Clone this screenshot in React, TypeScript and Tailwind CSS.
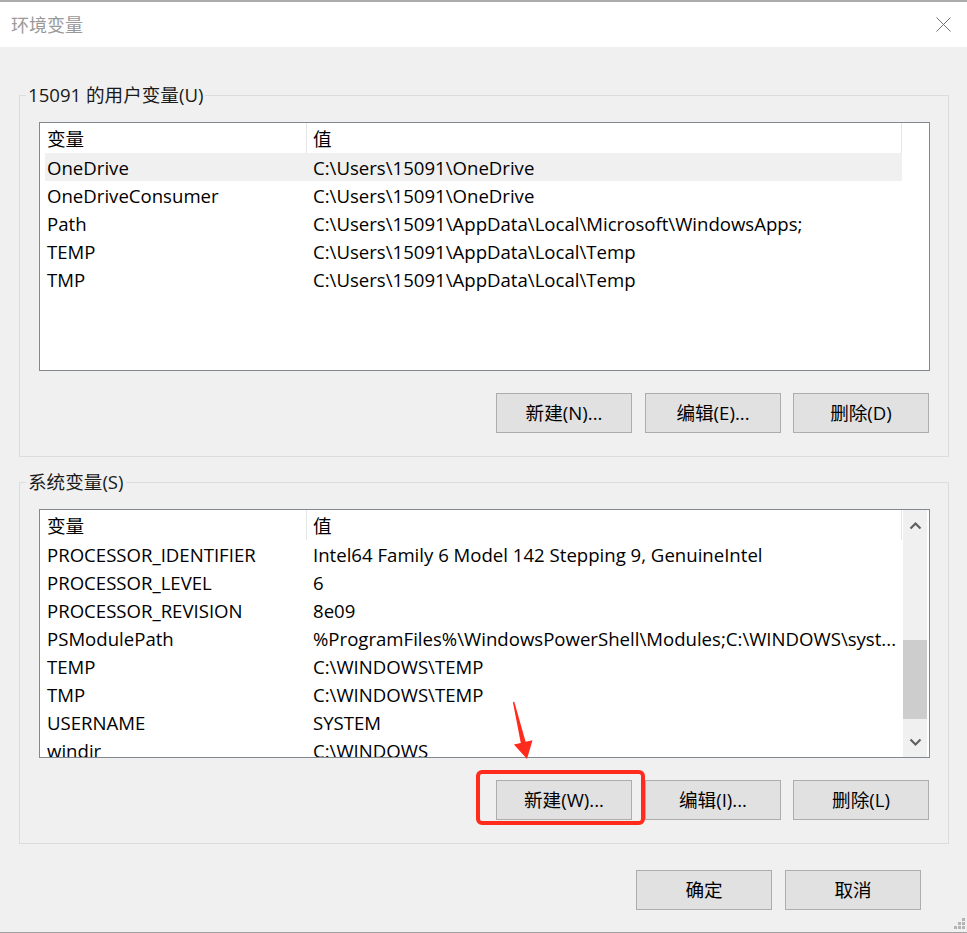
import React from "react";

type Row = { name: string; value: string; selected?: boolean };

const userVars: Row[] = [
  { name: "OneDrive", value: "C:\\Users\\15091\\OneDrive", selected: true },
  { name: "OneDriveConsumer", value: "C:\\Users\\15091\\OneDrive" },
  { name: "Path", value: "C:\\Users\\15091\\AppData\\Local\\Microsoft\\WindowsApps;" },
  { name: "TEMP", value: "C:\\Users\\15091\\AppData\\Local\\Temp" },
  { name: "TMP", value: "C:\\Users\\15091\\AppData\\Local\\Temp" },
];

const sysVars: Row[] = [
  { name: "PROCESSOR_IDENTIFIER", value: "Intel64 Family 6 Model 142 Stepping 9, GenuineIntel" },
  { name: "PROCESSOR_LEVEL", value: "6" },
  { name: "PROCESSOR_REVISION", value: "8e09" },
  { name: "PSModulePath", value: "%ProgramFiles%\\WindowsPowerShell\\Modules;C:\\WINDOWS\\syst..." },
  { name: "TEMP", value: "C:\\WINDOWS\\TEMP" },
  { name: "TMP", value: "C:\\WINDOWS\\TEMP" },
  { name: "USERNAME", value: "SYSTEM" },
  { name: "windir", value: "C:\\WINDOWS" },
];

function Header() {
  return (
    <div className="h-[30px] flex shrink-0">
      <div className="w-[267px] pl-[7px] pt-[2px] flex items-center border-r border-[#e5e5e5] leading-[24px]">变量</div>
      <div className="w-[595px] pl-[6px] pt-[2px] flex items-center border-r border-[#e5e5e5] leading-[24px]">值</div>
    </div>
  );
}

function Rows({ rows }: { rows: Row[] }) {
  return (
    <div className="flex flex-col">
      {rows.map((r, i) => (
        <div
          key={i}
          className={
            "h-[28px] ml-[5px] w-[857px] flex items-center shrink-0 whitespace-nowrap " +
            (r.selected ? "bg-[#f0f0f0]" : "")
          }
        >
          <div className="w-[262px] pl-[2px] pt-[2px] leading-[24px] overflow-hidden">{r.name}</div>
          <div className="flex-1 pl-[6px] pt-[2px] leading-[24px] overflow-hidden">{r.value}</div>
        </div>
      ))}
    </div>
  );
}

function Btn({ label, className = "" }: { label: string; className?: string }) {
  return (
    <button
      className={
        "w-[136px] h-[40px] bg-[#e1e1e1] border border-[#adadad] flex items-center justify-center leading-[24px] text-black " +
        className
      }
    >
      {label}
    </button>
  );
}

function Chevron({ up }: { up?: boolean }) {
  return (
    <svg width="13" height="9" viewBox="0 0 13 9">
      <path
        d={up ? "M1.5 7.5 L6.5 2.5 L11.5 7.5" : "M1.5 1.5 L6.5 6.5 L11.5 1.5"}
        fill="none"
        stroke="#606060"
        strokeWidth="2.2"
      />
    </svg>
  );
}

export default function App() {
  return (
    <div className="relative w-[967px] h-[933px] overflow-hidden bg-[#f0f0f0] flex flex-col text-[18.6px] text-black font-['Open_Sans','Noto_Sans_CJK_SC',sans-serif]">
      <div className="h-[2px] bg-[#acacac] shrink-0" />
      <div className="h-[45px] bg-white flex items-center justify-between pl-[11px] pr-[16px] shrink-0">
        <span className="text-[18px] text-[#999999] leading-[24px]">环境变量</span>
        <svg width="15" height="15" viewBox="0 0 15 15">
          <path d="M0.5 0.5 L14.5 14.5 M14.5 0.5 L0.5 14.5" stroke="#6f6f6f" strokeWidth="1" fill="none" />
        </svg>
      </div>

      <div className="flex-1 flex flex-col pl-[19px] pr-[18px] pt-[36px]">
        <fieldset className="border border-[#dcdcdc] pb-[23px]">
          <legend className="ml-[6px] px-[2px] leading-[24px] text-[#1a1a1a]">15091 的用户变量(U)</legend>
          <div className="mt-[15px] ml-[19px] mr-[18px] h-[249px] border border-[#828790] bg-white flex flex-col overflow-hidden">
            <Header />
            <Rows rows={userVars} />
          </div>
          <div className="mt-[22px] flex justify-end pr-[19px]">
            <Btn label="新建(N)..." className="mr-[13px]" />
            <Btn label="编辑(E)..." className="mr-[12px]" />
            <Btn label="删除(D)" />
          </div>
        </fieldset>

        <fieldset className="mt-[13px] border border-[#dcdcdc] pb-[23px]">
          <legend className="ml-[6px] px-[2px] leading-[24px] text-[#1a1a1a]">系统变量(S)</legend>
          <div className="mt-[15px] ml-[19px] mr-[18px] h-[249px] border border-[#828790] bg-white flex overflow-hidden">
            <div className="w-[863px] flex flex-col overflow-hidden">
              <Header />
              <Rows rows={sysVars} />
            </div>
            <div className="w-[24px] bg-[#f0f0f0] flex flex-col shrink-0">
              <div className="h-[30px] flex items-center justify-center shrink-0">
                <Chevron up />
              </div>
              <div className="flex-1 flex flex-col">
                <div className="h-[100px] shrink-0" />
                <div className="h-[79px] bg-[#cdcdcd] shrink-0" />
              </div>
              <div className="h-[30px] flex items-center justify-center shrink-0">
                <Chevron />
              </div>
            </div>
          </div>
          <div className="mt-[22px] flex justify-end pr-[19px]">
            <Btn label="新建(W)..." className="mr-[13px]" />
            <Btn label="编辑(I)..." className="mr-[12px]" />
            <Btn label="删除(L)" />
          </div>
        </fieldset>

        <div className="mt-[26px] flex justify-end pr-[28px]">
          <Btn label="确定" className="mr-[13px]" />
          <Btn label="取消" />
        </div>
      </div>
      <div className="h-px bg-[#a0a0a0] shrink-0" />

      {/* resize grip */}
      <svg className="absolute right-[2px] bottom-[3px]" width="12" height="12" viewBox="0 0 12 12">
        <rect x="9" y="0" width="3" height="3" fill="#b4b4b4" />
        <rect x="5" y="4" width="3" height="3" fill="#b4b4b4" />
        <rect x="9" y="4" width="3" height="3" fill="#b4b4b4" />
        <rect x="1" y="8" width="3" height="3" fill="#b4b4b4" />
        <rect x="5" y="8" width="3" height="3" fill="#b4b4b4" />
        <rect x="9" y="8" width="3" height="3" fill="#b4b4b4" />
      </svg>

      {/* annotation: red highlight box */}
      <div className="absolute left-[476px] top-[770px] w-[169px] h-[55px] border-[4px] border-[#ff2b1c] rounded-[6px] pointer-events-none" />

      {/* annotation: red arrow */}
      <svg className="absolute left-0 top-0 pointer-events-none" width="967" height="933" viewBox="0 0 967 933">
        <polygon
          points="512.9,702.15 514.3,701.85 525.6,741.85 532.5,740.3 527,759 513.9,744.5 520.8,742.95"
          fill="#ff2b1c"
        />
      </svg>
    </div>
  );
}
